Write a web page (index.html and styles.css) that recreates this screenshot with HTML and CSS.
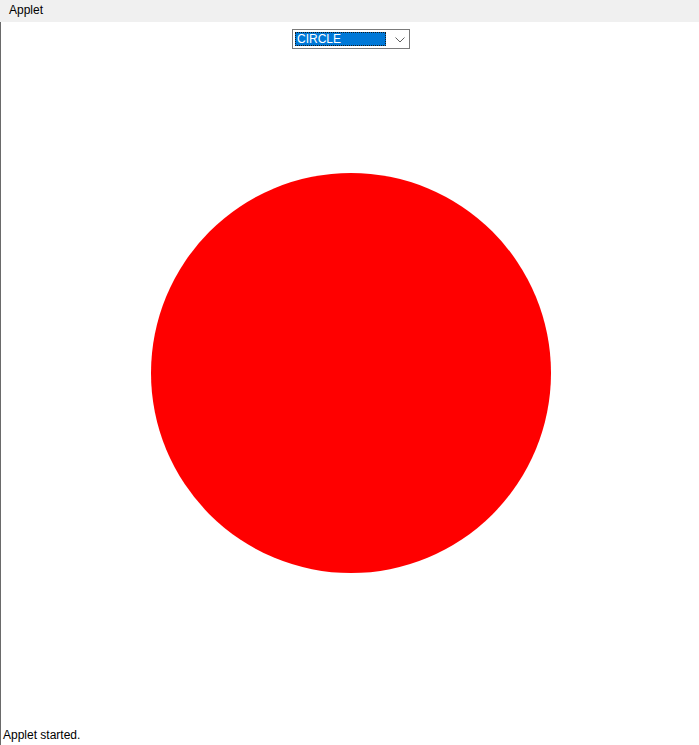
FILE: index.html
```html
<!DOCTYPE html>
<html>
<head>
<meta charset="utf-8">
<link rel="stylesheet" href="styles.css">
</head>
<body>
<div class="window">
  <div class="titlebar">Applet</div>
  <div class="applet">
    <div class="stage">
      <div class="choice">
        <div class="choice-value"><span>CIRCLE</span></div>
        <svg class="chevron" width="10" height="6" viewBox="0 0 10 6"><path d="M0.5 0.5 L5 5 L9.5 0.5" fill="none" stroke="#606060" stroke-width="1"/></svg>
      </div>
      <div class="shape"></div>
    </div>
    <div class="status">Applet started.</div>
  </div>
</div>
</body>
</html>
```
FILE: styles.css
```css
html, body {
  margin: 0;
  padding: 0;
  background: #ffffff;
  font-family: "Liberation Sans", Arial, sans-serif;
}
.window {
  width: 699px;
  height: 745px;
  display: flex;
  flex-direction: column;
  overflow: hidden;
}
.titlebar {
  height: 22px;
  flex: none;
  background: #f0f0f0;
  font-size: 12px;
  line-height: 20px;
  padding-left: 9px;
  color: #000;
  box-sizing: border-box;
}
.applet {
  flex: 1;
  display: flex;
  flex-direction: column;
  border-left: 1px solid #6a6a6a;
}
.stage {
  display: flex;
  flex-direction: column;
  align-items: center;
  padding-left: 2px;
  padding-top: 7px;
}
.choice {
  width: 118px;
  height: 20px;
  box-sizing: border-box;
  border: 1px solid #7a7a7a;
  background: #fff;
  display: flex;
  align-items: flex-start;
  padding: 2px;
}
.choice-value {
  width: 91px;
  height: 14px;
  box-sizing: border-box;
  background: #0078d7;
  outline: 1px dotted #1a1a1a;
  outline-offset: -1px;
  color: #fff;
  font-size: 12px;
  line-height: 14px;
  padding-left: 2px;
}
.chevron {
  margin-left: 9px;
  margin-top: 5px;
}
.shape {
  width: 400px;
  height: 400px;
  border-radius: 50%;
  background: #ff0000;
  margin-top: 124px;
}
.status {
  margin-top: auto;
  font-size: 12px;
  line-height: 14px;
  padding-left: 2px;
  padding-bottom: 3px;
  color: #000;
}
```
